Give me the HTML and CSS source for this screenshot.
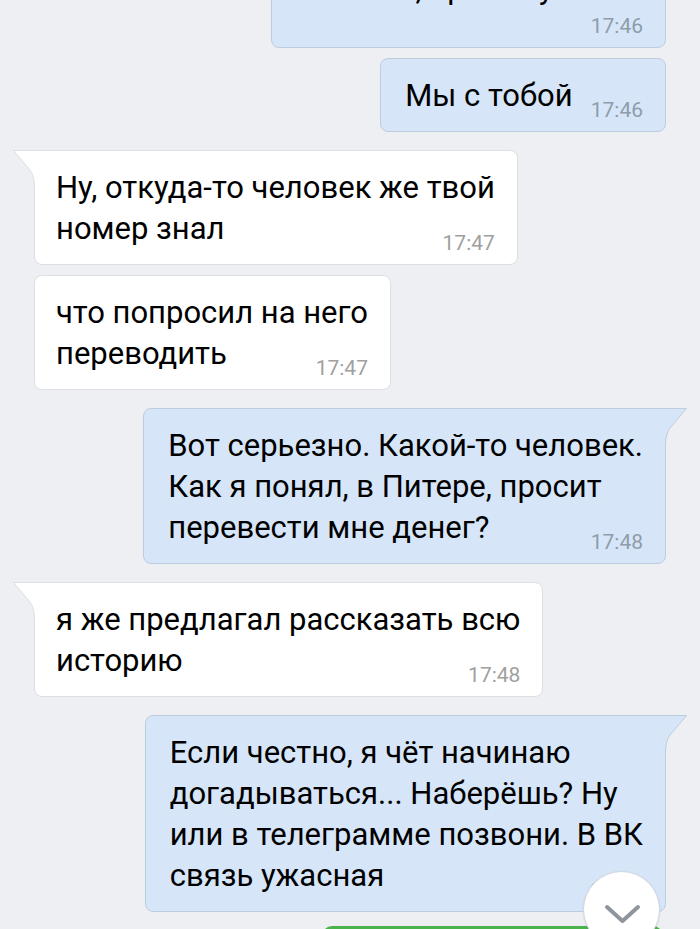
FILE: index.html
```html
<!DOCTYPE html>
<html lang="ru">
<head>
<meta charset="utf-8">
<title>Чат</title>
<link rel="stylesheet" href="styles.css">
</head>
<body>
<div class="screen">
  <div class="chat">
    <div class="group out">
      <div class="bubble out stacked">
        <div class="text">Мне тут пишет какой-то<br>человек, просит у меня</div>
        <div class="time">17:46</div>
      </div>
      <div class="bubble out inline">
        <div class="text">Мы с тобой</div>
        <div class="time">17:46</div>
      </div>
    </div>

    <div class="group in">
      <div class="bubble in tailed">
        <svg class="tail" viewBox="0 0 23 36" aria-hidden="true"><path class="tail-fill" d="M0.5 0.5 L17 20 Q21 25 21.5 36 L23 36 L23 0 L0.5 0 Z"/><path class="tail-line" d="M23 0.5 L0.5 0.5 L17 20 Q21 25 21.5 36"/></svg>
        <div class="text">Ну, откуда-то человек же твой<br>номер знал</div>
        <div class="time">17:47</div>
      </div>
      <div class="bubble in">
        <div class="text">что попросил на него<br>переводить</div>
        <div class="time">17:47</div>
      </div>
    </div>

    <div class="group out">
      <div class="bubble out tailed">
        <svg class="tail" viewBox="0 0 23 36" aria-hidden="true"><path class="tail-fill" d="M0.5 0.5 L17 20 Q21 25 21.5 36 L23 36 L23 0 L0.5 0 Z"/><path class="tail-line" d="M23 0.5 L0.5 0.5 L17 20 Q21 25 21.5 36"/></svg>
        <div class="text">Вот серьезно. Какой-то человек.<br>Как я понял, в Питере, просит<br>перевести мне денег?</div>
        <div class="time">17:48</div>
      </div>
    </div>

    <div class="group in">
      <div class="bubble in tailed">
        <svg class="tail" viewBox="0 0 23 36" aria-hidden="true"><path class="tail-fill" d="M0.5 0.5 L17 20 Q21 25 21.5 36 L23 36 L23 0 L0.5 0 Z"/><path class="tail-line" d="M23 0.5 L0.5 0.5 L17 20 Q21 25 21.5 36"/></svg>
        <div class="text">я же предлагал рассказать всю<br>историю</div>
        <div class="time">17:48</div>
      </div>
    </div>

    <div class="group out">
      <div class="bubble out tailed">
        <svg class="tail" viewBox="0 0 23 36" aria-hidden="true"><path class="tail-fill" d="M0.5 0.5 L17 20 Q21 25 21.5 36 L23 36 L23 0 L0.5 0 Z"/><path class="tail-line" d="M23 0.5 L0.5 0.5 L17 20 Q21 25 21.5 36"/></svg>
        <div class="text">Если честно, я чёт начинаю<br>догадываться... Наберёшь? Ну<br>или в телеграмме позвони. В ВК<br>связь ужасная</div>
        <div class="time">17:48</div>
      </div>
      <div class="green-bar"></div>
    </div>
  </div>

  <div class="scroll-btn">
    <svg viewBox="0 0 75 75" aria-hidden="true"><path d="M23 35 L38.5 49 L54 35"/></svg>
  </div>
</div>
</body>
</html>
```

FILE: styles.css
```css
html, body {
  margin: 0;
  padding: 0;
}

body {
  background: #edeff2;
  font-family: Roboto, "Noto Sans", sans-serif;
  color: #000;
}

.screen {
  position: relative;
  height: 929px;
  overflow: hidden;
}

.chat {
  display: flex;
  flex-direction: column;
  gap: 18px;
  padding: 0 34px;
  margin-top: -90px;
}

.group {
  display: flex;
  flex-direction: column;
  gap: 10px;
}

.group.in {
  align-items: flex-start;
}

.group.out {
  align-items: flex-end;
}

.bubble {
  position: relative;
  display: grid;
  padding: 16px 22px 15px 21px;
  border: 1px solid;
  border-radius: 8px;
  font-size: 31px;
  line-height: 41px;
}

.bubble.in {
  background: #ffffff;
  border-color: #dcdfe4;
}

.bubble.out {
  background: #d6e6f8;
  border-color: #bdcde0;
}

.bubble.out .text {
  padding-left: 3px;
}

.text,
.time {
  grid-area: 1 / 1;
}

.time {
  justify-self: end;
  align-self: end;
  font-size: 21px;
  line-height: 14px;
  margin-bottom: -1px;
}

.bubble.in .time {
  color: #a0a0a0;
}

.bubble.out .time {
  color: #8e9cab;
}

.bubble.stacked .time {
  grid-area: 2 / 1;
  margin-top: 10px;
}

.bubble.inline {
  grid-template-columns: auto auto;
  column-gap: 18px;
}

.bubble.inline .time {
  grid-area: 1 / 2;
}

.bubble.in.tailed {
  border-top-left-radius: 0;
}

.bubble.out.tailed {
  border-top-right-radius: 0;
}

.tail {
  position: absolute;
  top: -1px;
  width: 23px;
  height: 36px;
  overflow: visible;
}

.bubble.in .tail {
  left: -22px;
}

.bubble.out .tail {
  right: -22px;
  transform: scaleX(-1);
}

.tail-line {
  fill: none;
  stroke-width: 1;
}

.bubble.in .tail-fill {
  fill: #ffffff;
}

.bubble.in .tail-line {
  stroke: #dcdfe4;
}

.bubble.out .tail-fill {
  fill: #d6e6f8;
}

.bubble.out .tail-line {
  stroke: #bdcde0;
}

.green-bar {
  width: 341px;
  height: 40px;
  margin-top: 4px;
  margin-right: 3px;
  background: #4bb34b;
  border-radius: 10px;
}

.scroll-btn {
  position: absolute;
  left: 583px;
  top: 871px;
  width: 75px;
  height: 75px;
  border-radius: 50%;
  background: #ffffff;
  border: 1px solid #d3d7dc;
  box-shadow: 0 1px 3px rgba(0, 0, 0, 0.08);
}

.scroll-btn svg {
  width: 75px;
  height: 75px;
  display: block;
}

.scroll-btn path {
  fill: none;
  stroke: #8e959d;
  stroke-width: 4;
  stroke-linecap: round;
  stroke-linejoin: round;
}
```
